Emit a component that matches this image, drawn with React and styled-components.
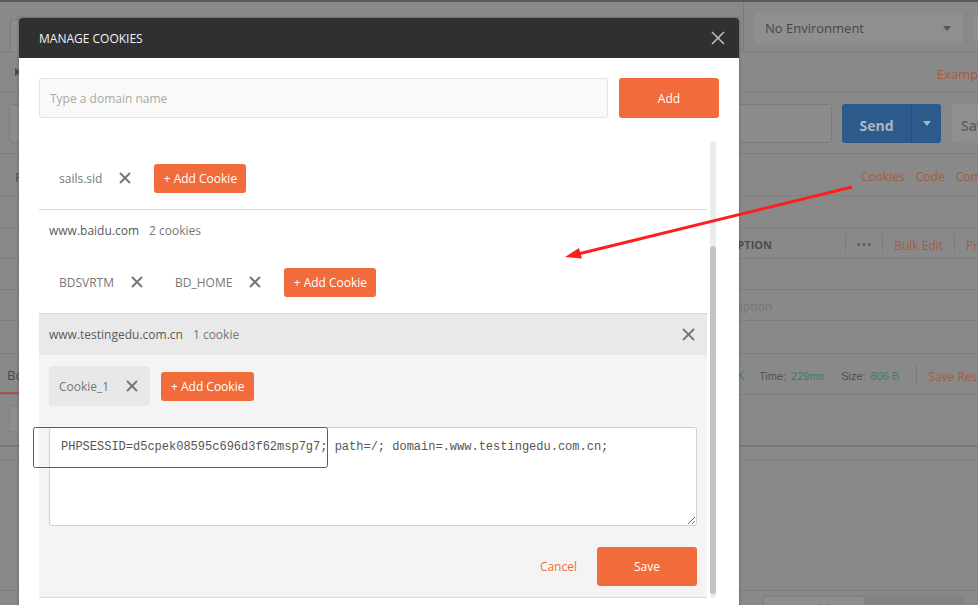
import React from "react";
import styled, { createGlobalStyle } from "styled-components";

const GlobalStyle = createGlobalStyle`
  body {
    margin: 0;
    overflow: hidden;
    font-family: "Open Sans", "Liberation Sans", sans-serif;
  }
  * { box-sizing: border-box; }
`;

const CrossIcon = ({ size = 12, color = "#777", weight = 2 }) => (
  <svg width={size} height={size} viewBox={`0 0 ${size} ${size}`}>
    <line x1="1" y1="1" x2={size - 1} y2={size - 1} stroke={color} strokeWidth={weight} />
    <line x1={size - 1} y1="1" x2="1" y2={size - 1} stroke={color} strokeWidth={weight} />
  </svg>
);

const domains = [
  { name: "localhost", count: "1 cookie", cookies: ["sails.sid"] },
  { name: "www.baidu.com", count: "2 cookies", cookies: ["BDSVRTM", "BD_HOME"] },
  {
    name: "www.testingedu.com.cn",
    count: "1 cookie",
    cookies: ["Cookie_1"],
    open: true,
    value: "PHPSESSID=d5cpek08595c696d3f62msp7g7; path=/; domain=.www.testingedu.com.cn;",
  },
];

const App = () => {
  return (
    <Page>
      <GlobalStyle />

      {/* dimmed application behind the dialog */}
      <Shell>
        <TopStrip />
        <BgRow $h={50}>
          <TabStub />
          <Right $pad={4}>
            <VSep $h={49} />
            <EnvSelect>
              No Environment
              <Caret $color="#555" />
            </EnvSelect>
            <SideBox />
          </Right>
        </BgRow>
        <BgRow $h={41}>
          <PlayTriangle />
          <Right $pad={198}>
            <DimLink>Examples</DimLink>
          </Right>
        </BgRow>
        <BgRow $h={61}>
          <UrlInput />
          <SendButton>
            <SendLabel>Send</SendLabel>
            <SendCaret>
              <Caret $color="#a9b6c4" />
            </SendCaret>
          </SendButton>
          <SaveGhost>Save</SaveGhost>
        </BgRow>
        <BgRow $h={42}>
          <BgText $ml={15}>Params</BgText>
          <Right $pad={122} $gap={11}>
            <DimLink $size={12}>Cookies</DimLink>
            <DimLink $size={12}>Code</DimLink>
            <DimLink $size={12}>Comments</DimLink>
          </Right>
        </BgRow>
        <BgRow $h={32} />
        <BgRow $h={31}>
          <EndCell $w={772} $bold>DESCRIPTION</EndCell>
          <VSep $h={17} $ml={73} />
          <Dots>•••</Dots>
          <VSep $h={17} $ml={10} />
          <DimLink $size={12} $ml={11}>Bulk Edit</DimLink>
          <VSep $h={17} $ml={11} />
          <DimLink $size={12} $ml={11}>Presets</DimLink>
        </BgRow>
        <BgRow $h={31} />
        <BgRow $h={31}>
          <EndCell $w={772} $color="#767676">Description</EndCell>
        </BgRow>
        <BgRow $h={33} />
        <BgRow $h={41}>
          <BodyTab>Body</BodyTab>
          <EndCell $w={744 - 52} $color="#3f7e5e">200 OK</EndCell>
          <Stat $ml={15}>Time:</Stat>
          <StatValue>229ms</StatValue>
          <Stat $ml={17}>Size:</Stat>
          <StatValue>806 B</StatValue>
          <VSep $h={20} $ml={17} />
          <DimLink $size={12} $ml={11}>Save Response</DimLink>
        </BgRow>
        <BgRow $h={52} $thick>
          <ResponseStub />
        </BgRow>
        <BgRow $h={14} />
        <BgRow $h={130} />
        <BottomBar>
          <Right $pad={23}>
            <ModeSwitch>
              <ModeTab $active>Build</ModeTab>
              <ModeTab>Browse</ModeTab>
            </ModeSwitch>
            <PaneIcon />
          </Right>
        </BottomBar>
      </Shell>

      {/* the dialog */}
      <Modal>
        <ModalHeader>
          <ModalTitle>MANAGE COOKIES</ModalTitle>
          <CrossIcon size={14} color="#bdbdbd" weight={1.6} />
        </ModalHeader>
        <ModalBody>
          <DomainForm>
            <DomainInput placeholder="Type a domain name" />
            <PrimaryButton $w={100} $h={40}>Add</PrimaryButton>
          </DomainForm>

          <ListArea>
            <Viewport>
              <ScrollContent $offset={34}>
                {domains.map((d) => (
                  <DomainBlock key={d.name}>
                    <DomainHeader $open={d.open}>
                      <DomainName>{d.name}</DomainName>
                      <DomainCount>{d.count}</DomainCount>
                      {d.open && (
                        <HeaderClose>
                          <CrossIcon size={13} color="#777" weight={2} />
                        </HeaderClose>
                      )}
                    </DomainHeader>
                    {d.open ? (
                      <ExpandedBody>
                        <CookieRow $flush>
                          {d.cookies.map((c) => (
                            <Chip key={c} $selected>
                              <span>{c}</span>
                              <CrossIcon />
                            </Chip>
                          ))}
                          <PrimaryButton $w={93} $h={29}>+ Add Cookie</PrimaryButton>
                        </CookieRow>
                        <CookieText readOnly value={d.value} spellCheck={false} />
                        <Actions>
                          <CancelButton>Cancel</CancelButton>
                          <PrimaryButton $w={100} $h={39}>Save</PrimaryButton>
                        </Actions>
                      </ExpandedBody>
                    ) : (
                      <CookieRow>
                        {d.cookies.map((c) => (
                          <Chip key={c}>
                            <span>{c}</span>
                            <CrossIcon />
                          </Chip>
                        ))}
                        <PrimaryButton $w={92} $h={29} $ml={1}>+ Add Cookie</PrimaryButton>
                      </CookieRow>
                    )}
                  </DomainBlock>
                ))}
              </ScrollContent>
            </Viewport>
            <ScrollTrack>
              <ScrollThumb />
            </ScrollTrack>
          </ListArea>
        </ModalBody>
      </Modal>

      {/* red annotations drawn on the screenshot */}
      <Annotations width="978" height="605" viewBox="0 0 978 605">
        <rect x="33.5" y="427.5" width="294" height="40" rx="2" fill="none" stroke="#e0262b" strokeWidth="1" />
        <line x1="852" y1="187" x2="578" y2="254" stroke="#ff1e1e" strokeWidth="3" />
        <polygon points="565,257 582,258.5 579,248" fill="#ff1e1e" />
      </Annotations>
    </Page>
  );
};

const Page = styled.div`
  position: relative;
  width: 978px;
  height: 605px;
  overflow: hidden;
  background: #898989;
`;

const Shell = styled.div`
  display: flex;
  flex-direction: column;
  height: 100%;
`;

const TopStrip = styled.div`
  height: 2px;
  flex-shrink: 0;
  background: #5a5a5a;
`;

const BgRow = styled.div`
  display: flex;
  align-items: center;
  height: ${(p) => p.$h}px;
  flex-shrink: 0;
  border-bottom: ${(p) => (p.$thick ? "2px solid #7a7a7a" : "1px solid #7f7f7f")};
  & > * { flex-shrink: 0; }
`;

const Right = styled.div`
  margin-left: auto;
  width: 239px;
  height: 100%;
  display: flex;
  align-items: center;
  gap: ${(p) => p.$gap || 0}px;
  padding-left: ${(p) => p.$pad || 0}px;
  & > * { flex-shrink: 0; }
`;

const VSep = styled.div`
  width: 1px;
  height: ${(p) => p.$h}px;
  margin-left: ${(p) => p.$ml || 0}px;
  background: #7a7a7a;
`;

const TabStub = styled.div`
  align-self: flex-end;
  margin-left: 10px;
  width: 60px;
  height: 32px;
  border: 1px solid #7b7b7b;
  border-bottom: none;
  border-radius: 3px 3px 0 0;
  background: #8d8d8d;
`;

const EnvSelect = styled.div`
  margin-left: 10px;
  margin-top: 2px;
  width: 209px;
  height: 30px;
  border-radius: 3px;
  background: #8f8f8f;
  display: flex;
  align-items: center;
  justify-content: space-between;
  padding: 1px 12px 0 11px;
  font-size: 13px;
  color: #474747;
`;

const Caret = styled.span`
  width: 0;
  height: 0;
  border-left: 4px solid transparent;
  border-right: 4px solid transparent;
  border-top: 5px solid ${(p) => p.$color};
`;

const SideBox = styled.div`
  margin-left: 11px;
  margin-top: 2px;
  width: 40px;
  height: 30px;
  border-radius: 3px;
  background: #8f8f8f;
`;

const PlayTriangle = styled.div`
  margin-left: 15px;
  width: 0;
  height: 0;
  border-top: 4px solid transparent;
  border-bottom: 4px solid transparent;
  border-left: 6px solid #4a4a4a;
`;

const DimLink = styled.span`
  padding-top: 4px;
  font-size: ${(p) => p.$size || 13}px;
  color: #a65b3e;
  margin-left: ${(p) => p.$ml || 0}px;
  white-space: nowrap;
`;

const UrlInput = styled.div`
  margin-left: 9px;
  margin-top: 1px;
  flex: 1 1 auto !important;
  height: 39px;
  border: 1px solid #7c7c7c;
  border-radius: 3px;
  background: #8c8c8c;
`;

const SendButton = styled.div`
  margin-left: 10px;
  margin-top: 1px;
  width: 99px;
  height: 39px;
  border-radius: 3px;
  background: #2b5a8b;
  display: flex;
`;

const SendLabel = styled.div`
  flex: 1;
  display: flex;
  align-items: center;
  justify-content: center;
  padding-top: 3px;
  font-size: 14px;
  font-weight: 700;
  color: #a9b6c4;
  border-right: 1px solid #26507c;
`;

const SendCaret = styled.div`
  width: 29px;
  display: flex;
  align-items: center;
  justify-content: center;
`;

const SaveGhost = styled.div`
  margin-left: 11px;
  margin-right: -34px;
  margin-top: 1px;
  width: 60px;
  height: 39px;
  border-radius: 3px;
  background: #8f8f8f;
  display: flex;
  align-items: center;
  padding: 3px 0 0 9px;
  font-size: 14px;
  font-weight: 600;
  color: #5e5e5e;
`;

const BgText = styled.span`
  margin-left: ${(p) => p.$ml || 0}px;
  padding-top: 4px;
  font-size: 13px;
  color: #505050;
`;

const EndCell = styled.div`
  width: ${(p) => p.$w}px;
  padding-top: 3px;
  text-align: right;
  font-size: ${(p) => (p.$bold ? 11 : 12)}px;
  font-weight: ${(p) => (p.$bold ? 700 : 400)};
  color: ${(p) => p.$color || "#4e4e4e"};
  white-space: nowrap;
`;

const Dots = styled.span`
  margin-left: 10px;
  padding-top: 2px;
  font-size: 13px;
  letter-spacing: 0.5px;
  color: #5e5e5e;
`;

const BodyTab = styled.div`
  align-self: flex-end;
  width: 52px;
  height: 37px;
  padding: 9px 0 0 7px;
  border-bottom: 2px solid #a3573b;
  font-size: 13px;
  color: #4a4a4a;
`;

const Stat = styled.span`
  margin-left: ${(p) => p.$ml || 0}px;
  padding-top: 3px;
  font-family: "Liberation Sans", sans-serif;
  font-size: 11px;
  color: #505050;
`;

const StatValue = styled(Stat)`
  margin-left: 5px;
  color: #3f7e5e;
`;

const ResponseStub = styled.div`
  align-self: flex-start;
  margin-top: 10px;
  margin-left: 9px;
  width: 60px;
  height: 27px;
  border-radius: 3px;
  background: #8e8e8e;
  border: 1px solid #828282;
`;

const BottomBar = styled.div`
  flex: 1;
  display: flex;
`;

const ModeSwitch = styled.div`
  align-self: flex-start;
  margin-top: 4px;
  display: flex;
  width: 203px;
  height: 26px;
  padding: 2px;
  border-radius: 3px;
  background: #838383;
`;

const ModeTab = styled.div`
  flex: 1;
  border-radius: 3px;
  background: ${(p) => (p.$active ? "#8f8f8f" : "transparent")};
  text-align: center;
  font-size: 13px;
  line-height: 18px;
  padding-top: 3px;
  color: ${(p) => (p.$active ? "#a65b3e" : "#575757")};
`;

const PaneIcon = styled.div`
  align-self: flex-start;
  margin-top: 6px;
  margin-left: 18px;
  width: 15px;
  height: 12px;
  border: 1px solid #555;
  border-bottom: none;
`;

const Modal = styled.div`
  position: absolute;
  left: 19px;
  top: 18px;
  width: 720px;
  height: 620px;
  background: #fff;
  border-radius: 3px 3px 0 0;
  box-shadow: 0 0 3px rgba(0, 0, 0, 0.35);
`;

const ModalHeader = styled.div`
  height: 40px;
  background: #303030;
  border-radius: 3px 3px 0 0;
  display: flex;
  align-items: center;
  justify-content: space-between;
  padding: 0 14px 0 20px;
`;

const ModalTitle = styled.span`
  font-size: 12px;
  color: #f2f2f2;
`;

const ModalBody = styled.div`
  padding: 20px 20px 0;
`;

const DomainForm = styled.div`
  display: flex;
  gap: 11px;
  height: 40px;
`;

const DomainInput = styled.input`
  flex: 1;
  min-width: 0;
  height: 40px;
  padding: 0 10px;
  border: 1px solid #e3e3e3;
  border-radius: 3px;
  background: #f9f9f9;
  font-family: inherit;
  font-size: 12px;
  color: #555;
  outline: none;
  &::placeholder { color: #a9a9a9; }
`;

const PrimaryButton = styled.button`
  flex-shrink: 0;
  width: ${(p) => p.$w}px;
  height: ${(p) => p.$h}px;
  margin-left: ${(p) => p.$ml || 0}px;
  padding: 0;
  border: none;
  border-radius: 3px;
  background: #f26b3a;
  color: #fff;
  font-family: inherit;
  font-size: 12px;
  cursor: pointer;
`;

const ListArea = styled.div`
  margin-top: 22px;
  display: flex;
  gap: 3px;
  height: 458px;
`;

const Viewport = styled.div`
  width: 668px;
  height: 100%;
  overflow: hidden;
`;

const ScrollContent = styled.div`
  margin-top: -${(p) => p.$offset}px;
`;

const DomainBlock = styled.div`
  border-bottom: 1px solid #d9d9d9;
`;

const DomainHeader = styled.div`
  height: 41px;
  display: flex;
  align-items: center;
  gap: 10px;
  padding: 0 12px 0 10px;
  background: ${(p) => (p.$open ? "#e9e9e9" : "transparent")};
  font-size: 12px;
`;

const DomainName = styled.span`
  color: #5a5a5a;
`;

const DomainCount = styled.span`
  color: #777;
`;

const HeaderClose = styled.span`
  margin-left: auto;
  display: flex;
`;

const CookieRow = styled.div`
  display: flex;
  align-items: center;
  gap: 10px;
  padding: ${(p) => (p.$flush ? "0" : "11px 10px")};
  & > button { margin-left: 1px; }
`;

const Chip = styled.div`
  height: 40px;
  display: flex;
  align-items: center;
  gap: 17px;
  padding: 0 12px 0 10px;
  border-radius: 3px;
  background: ${(p) => (p.$selected ? "#e8e8e8" : "transparent")};
  font-size: 12px;
  color: #777;
`;

const ExpandedBody = styled.div`
  background: #f4f4f4;
  padding: 11px 10px 11px 10px;
`;

const CookieText = styled.textarea`
  display: block;
  width: 100%;
  height: 99px;
  margin-top: 21px;
  padding: 12px 11px;
  border: 1px solid #cfcfcf;
  border-radius: 3px;
  background: #fff;
  font-family: "Liberation Mono", monospace;
  font-size: 12px;
  line-height: 14px;
  color: #555;
  resize: vertical;
  outline: none;
`;

const Actions = styled.div`
  margin-top: 21px;
  display: flex;
  justify-content: flex-end;
  align-items: center;
  gap: 20px;
`;

const CancelButton = styled.button`
  padding: 0;
  border: none;
  background: none;
  font-family: inherit;
  font-size: 12px;
  color: #f26b3a;
  cursor: pointer;
`;

const ScrollTrack = styled.div`
  margin-top: 1px;
  width: 6px;
  height: 457px;
  border-radius: 3px;
  background: #ececec;
  display: flex;
  flex-direction: column;
`;

const ScrollThumb = styled.div`
  margin-top: 105px;
  height: 348px;
  border-radius: 3px;
  background: #c4c4c4;
`;

const Annotations = styled.svg`
  position: absolute;
  left: 0;
  top: 0;
  pointer-events: none;
`;

export default App;
